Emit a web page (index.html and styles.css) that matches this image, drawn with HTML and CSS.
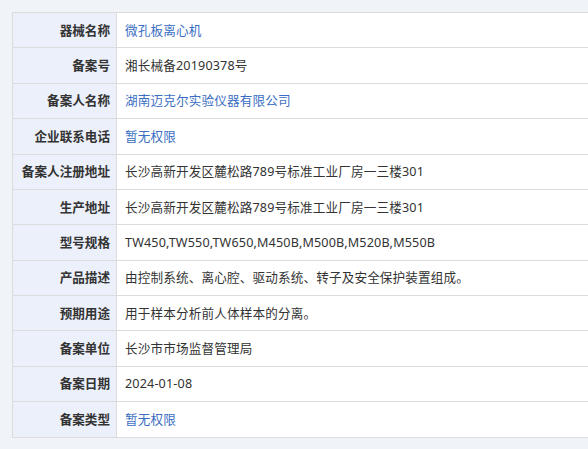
FILE: index.html
```html
<!DOCTYPE html>
<html lang="zh">
<head>
<meta charset="utf-8">
<link rel="stylesheet" href="styles.css">
</head>
<body>
<div class="page">
<table class="info">
<tbody>
<tr><th>器械名称</th><td><a class="link">微孔板离心机</a></td></tr>
<tr><th>备案号</th><td>湘长械备20190378号</td></tr>
<tr><th>备案人名称</th><td><a class="link">湖南迈克尔实验仪器有限公司</a></td></tr>
<tr><th>企业联系电话</th><td><a class="link">暂无权限</a></td></tr>
<tr><th>备案人注册地址</th><td>长沙高新开发区麓松路789号标准工业厂房一三楼301</td></tr>
<tr><th>生产地址</th><td>长沙高新开发区麓松路789号标准工业厂房一三楼301</td></tr>
<tr><th>型号规格</th><td>TW450,TW550,TW650,M450B,M500B,M520B,M550B</td></tr>
<tr><th>产品描述</th><td>由控制系统、离心腔、驱动系统、转子及安全保护装置组成。</td></tr>
<tr><th>预期用途</th><td>用于样本分析前人体样本的分离。</td></tr>
<tr><th>备案单位</th><td>长沙市市场监督管理局</td></tr>
<tr><th>备案日期</th><td>2024-01-08</td></tr>
<tr><th>备案类型</th><td><a class="link">暂无权限</a></td></tr>
</tbody>
</table>
</div>
</body>
</html>
```
FILE: styles.css
```css
html, body {
  margin: 0;
  padding: 0;
  background: #f0f3f7;
  overflow: hidden;
}
.page {
  padding: 12px 0 0 12px;
  font-family: "Noto Sans", "Noto Sans CJK SC", sans-serif;
  font-size: 12.6px;
  color: #333;
}
.info {
  border-collapse: collapse;
  width: 600px;
  background: #fff;
}
.info th, .info td {
  border: 1px solid #dcdcdc;
  padding: 7.7px 8px;
  line-height: 19px;
  text-align: left;
  white-space: nowrap;
}
.info td {
  letter-spacing: 0.15px;
}
.info th {
  width: 97px;
  text-align: right;
  padding-left: 0;
  padding-right: 6px;
  background: #ebf0fa;
  font-weight: bold;
  color: #333;
}
.link {
  color: #3b6ec2;
  text-decoration: none;
}
```
